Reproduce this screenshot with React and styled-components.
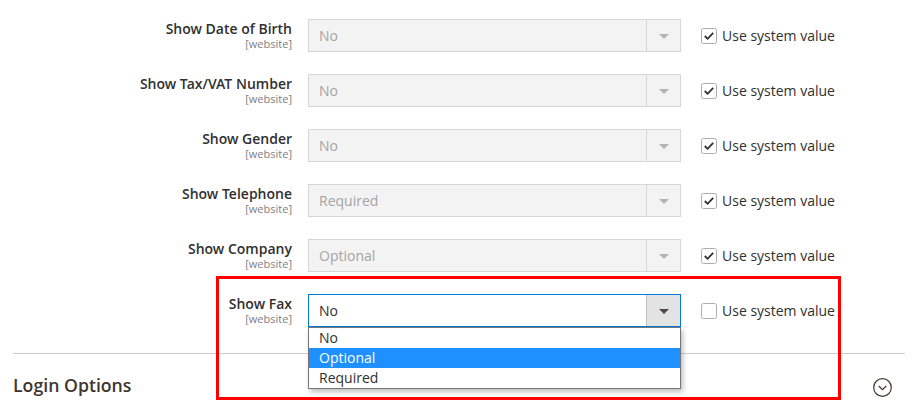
import React from "react";
import styled, { createGlobalStyle } from "styled-components";

const GlobalStyle = createGlobalStyle`
  html, body {
    margin: 0;
    padding: 0;
    background: #fff;
  }
  body {
    font-family: "Open Sans", "Liberation Sans", Arial, sans-serif;
    color: #303030;
  }
`;

const semibold = `"Open Sans SemiBold", "Open Sans Semibold", "Open Sans", "Liberation Sans", Arial, sans-serif`;

const Page = styled.div`
  position: relative;
  width: 917px;
  height: 415px;
  overflow: hidden;
  padding: 19px 12px 0 13px;
  box-sizing: border-box;
`;

const Fieldset = styled.div`
  display: flex;
  flex-direction: column;
  gap: 22px;
`;

const Row = styled.div`
  display: flex;
  align-items: flex-start;
  height: 33px;
`;

const LabelCol = styled.div`
  width: 279px;
  margin-right: 16px;
  padding-top: 2px;
  display: flex;
  flex-direction: column;
  align-items: flex-end;
  text-align: right;
`;

const Label = styled.span`
  font-family: ${semibold};
  font-size: 14px;
  font-weight: 600;
  line-height: 16px;
  color: #303030;
`;

const Scope = styled.span`
  margin-top: 1px;
  font-size: 11px;
  line-height: 11px;
  color: #808080;
`;

const SelectWrap = styled.div`
  position: relative;
  width: 373px;
  height: 33px;
`;

const SelectBox = styled.div`
  display: flex;
  height: 100%;
  box-sizing: border-box;
  border: 1px solid ${(p) => (p.$active ? "#007bdb" : "#d6d6d6")};
  background: ${(p) => (p.$active ? "#fff" : "#f3f3f3")};
`;

const SelectValue = styled.div`
  flex: 1;
  display: flex;
  align-items: center;
  padding-left: 10px;
  font-size: 14px;
  color: ${(p) => (p.$active ? "#303030" : "#a4a4a4")};
`;

const ArrowCell = styled.div`
  width: 33px;
  display: flex;
  align-items: center;
  justify-content: center;
  border-left: 1px solid ${(p) => (p.$active ? "#c2c2c2" : "#d6d6d6")};
  background: ${(p) => (p.$active ? "#e3e3e3" : "#f3f3f3")};

  &::after {
    content: "";
    border-left: 5px solid transparent;
    border-right: 5px solid transparent;
    border-top: 5px solid ${(p) => (p.$active ? "#514943" : "#b4b4b4")};
    margin-top: 1px;
  }
`;

const OptionList = styled.ul`
  position: absolute;
  left: 0;
  top: 33px;
  width: 373px;
  margin: 0;
  padding: 0;
  list-style: none;
  box-sizing: border-box;
  border: 1px solid #767676;
  background: #fff;
  box-shadow: 2px 3px 5px rgba(0, 0, 0, 0.25);
  z-index: 2;
`;

const OptionItem = styled.li`
  height: 20px;
  line-height: 20px;
  padding-left: 10px;
  font-size: 14px;
  color: ${(p) => (p.$selected ? "#fff" : "#303030")};
  background: ${(p) => (p.$selected ? "#1e90ff" : "transparent")};
`;

const SystemValue = styled.label`
  display: flex;
  align-items: center;
  gap: 5px;
  margin-left: 20px;
  height: 33px;
  font-size: 14px;
  color: #303030;
  white-space: nowrap;
`;

const Divider = styled.div`
  margin-top: 26px;
  height: 1px;
  width: 892px;
  background: #cccccc;
`;

const SectionHead = styled.div`
  display: flex;
  align-items: center;
  justify-content: space-between;
  padding: 18px 13px 0 0;
`;

const SectionTitle = styled.span`
  font-family: ${semibold};
  font-size: 17.7px;
  font-weight: 600;
  line-height: 24px;
  color: #41362f;
`;

const ToggleIcon = styled.svg`
  margin-top: 6px;
  display: block;
`;

const Highlight = styled.div`
  position: absolute;
  left: 216px;
  top: 276px;
  width: 625px;
  height: 124px;
  box-sizing: border-box;
  border: 3px solid #ff0000;
  pointer-events: none;
  z-index: 3;
`;

const Checkbox = ({ checked }) => (
  <svg width="16" height="16" viewBox="0 0 16 16">
    <rect x="0.5" y="0.5" width="15" height="15" rx="2" fill="#fff" stroke="#adadad" />
    {checked && (
      <polyline
        points="3.8,8 6.6,10.8 12.2,4.8"
        fill="none"
        stroke="#303030"
        strokeWidth="1.8"
      />
    )}
  </svg>
);

const fields = [
  { label: "Show Date of Birth", value: "No" },
  { label: "Show Tax/VAT Number", value: "No" },
  { label: "Show Gender", value: "No" },
  { label: "Show Telephone", value: "Required" },
  { label: "Show Company", value: "Optional" },
  { label: "Show Fax", value: "No", open: true },
];

const options = ["No", "Optional", "Required"];

const App = () => {
  return (
    <Page>
      <GlobalStyle />
      <Fieldset>
        {fields.map((f) => (
          <Row key={f.label}>
            <LabelCol>
              <Label>{f.label}</Label>
              <Scope>[website]</Scope>
            </LabelCol>
            <SelectWrap>
              <SelectBox $active={f.open}>
                <SelectValue $active={f.open}>{f.value}</SelectValue>
                <ArrowCell $active={f.open} />
              </SelectBox>
              {f.open && (
                <OptionList>
                  {options.map((o) => (
                    <OptionItem key={o} $selected={o === "Optional"}>
                      {o}
                    </OptionItem>
                  ))}
                </OptionList>
              )}
            </SelectWrap>
            <SystemValue>
              <Checkbox checked={!f.open} />
              Use system value
            </SystemValue>
          </Row>
        ))}
      </Fieldset>
      <Divider />
      <SectionHead>
        <SectionTitle>Login Options</SectionTitle>
        <ToggleIcon width="19" height="19" viewBox="0 0 19 19">
          <circle cx="9.5" cy="9.5" r="8.8" fill="none" stroke="#41362f" strokeWidth="1.2" />
          <polyline
            points="5.8,8 9.5,11.6 13.2,8"
            fill="none"
            stroke="#41362f"
            strokeWidth="1.2"
          />
        </ToggleIcon>
      </SectionHead>
      <Highlight />
    </Page>
  );
};

export default App;
